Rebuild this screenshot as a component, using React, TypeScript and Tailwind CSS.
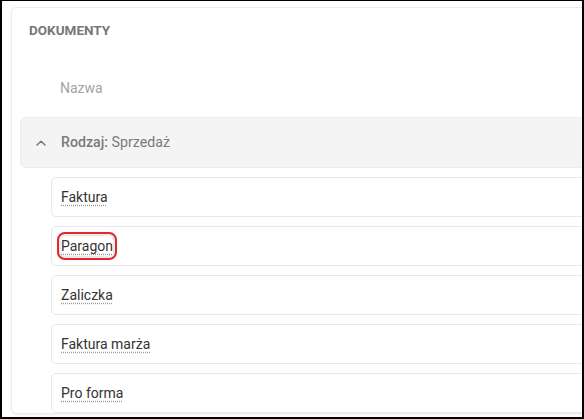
import React from "react"

const docTypes = ["Faktura", "Paragon", "Zaliczka", "Faktura marża", "Pro forma"]

function ChevronUp() {
    return (
        <svg width="10" height="6" viewBox="0 0 10 6" fill="none">
            <path d="M1 5L5 1.2L9 5" stroke="#777777" strokeWidth="1.5" strokeLinecap="round" strokeLinejoin="round" />
        </svg>
    )
}

export default function App() {
    return (
        <div className="w-[584px] h-[419px] overflow-hidden bg-white border-l-2 border-t border-r-2 border-b-2 border-black font-['Roboto',sans-serif]">
            <div className="pt-[6px] pl-[9px]">
                <div className="w-[640px] rounded-[6px] border border-[#ececec] bg-white shadow-[0_1px_3px_rgba(0,0,0,0.07)]">
                    <div className="h-[45px] flex items-center pl-[17px]">
                        <span className="text-[13.5px] font-bold text-[#777777]">DOKUMENTY</span>
                    </div>
                    <div className="h-[64px] pt-[6px] flex items-center pl-[48px]">
                        <span className="text-[14px] text-[#a3a3a3]">Nazwa</span>
                    </div>
                    <div className="pl-[8px]">
                        <div className="h-[51px] flex items-center rounded-l-[6px] bg-[#f4f4f4] border border-[#ebebeb] pl-[15px]">
                            <ChevronUp />
                            <span className="ml-[15px] text-[14.2px] text-[#7a7a7a]">
                                <span className="font-medium">Rodzaj:</span> Sprzedaż
                            </span>
                        </div>
                        <ul className="mt-[9px] ml-[31px] flex flex-col gap-[9px]">
                            {docTypes.map(name => (
                                <li key={name} className="h-[40px] flex items-center rounded-[5px] border border-[#e8e8e8] bg-white pl-[9px]">
                                    <span
                                        className={
                                            name === "Paragon"
                                                ? "text-[14px] leading-[20px] text-[#333333] underline decoration-dotted decoration-[#9a9a9a] underline-offset-[3px] rounded-[4px] outline-2 outline-[#e3262b] outline-offset-[2px] shadow-[0_0_5px_2px_rgba(0,0,0,0.12)]"
                                                : "text-[14px] leading-[20px] text-[#333333] underline decoration-dotted decoration-[#9a9a9a] underline-offset-[3px]"
                                        }
                                    >
                                        {name}
                                    </span>
                                </li>
                            ))}
                        </ul>
                    </div>
                </div>
            </div>
        </div>
    )
}
